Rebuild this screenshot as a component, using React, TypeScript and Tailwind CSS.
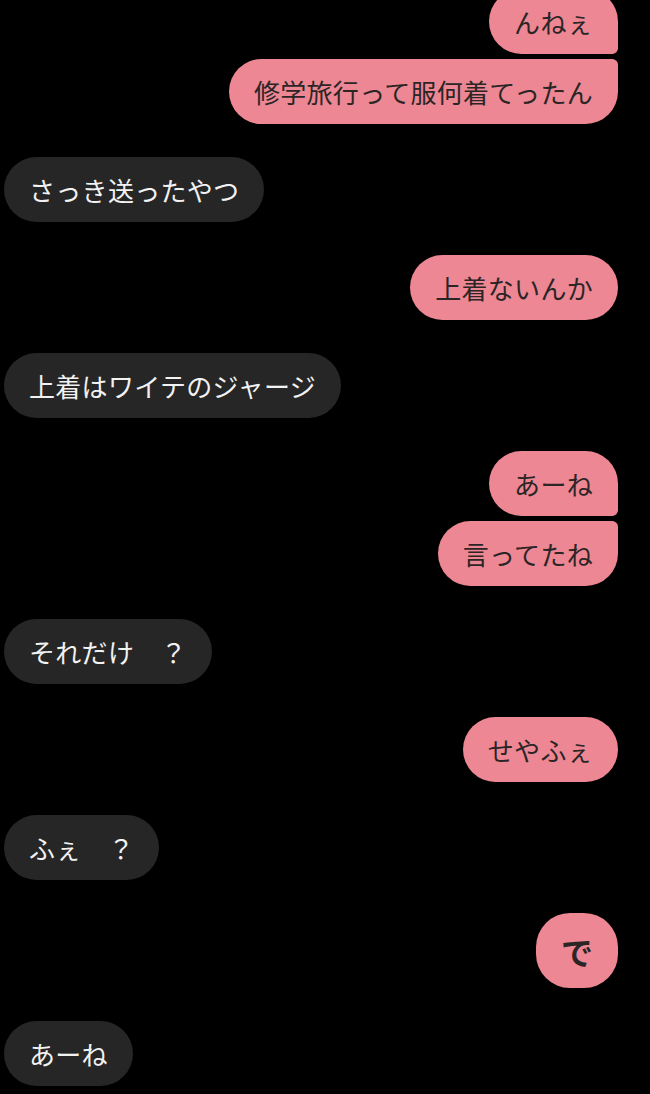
import React from "react";

type Msg = {
  text: string;
  me: boolean;
  corner?: "tr" | "br";
  big?: boolean;
  gap?: "group" | "new";
};

const messages: Msg[] = [
  { text: "んねぇ", me: true, corner: "br" },
  { text: "修学旅行って服何着てったん", me: true, corner: "tr", gap: "group" },
  { text: "さっき送ったやつ", me: false },
  { text: "上着ないんか", me: true },
  { text: "上着はワイテのジャージ", me: false },
  { text: "あーね", me: true, corner: "br" },
  { text: "言ってたね", me: true, corner: "tr", gap: "group" },
  { text: "それだけ　？", me: false },
  { text: "せやふぇ", me: true },
  { text: "ふぇ　？", me: false },
  { text: "で", me: true, big: true },
  { text: "あーね", me: false },
];

const Bubble = ({ m, first }: { m: Msg; first: boolean }) => {
  const cornerCls =
    m.corner === "br" ? "rounded-br-[6px]" : m.corner === "tr" ? "rounded-tr-[6px]" : "";
  const colorCls = m.me ? "bg-[#ee8794] text-[#2b2526]" : "bg-[#262626] text-[#f2f2f2]";
  const sizeCls = m.big
    ? "h-[75px] px-[25px] text-[32px] font-bold"
    : "h-[65px] px-[25px] text-[26px] tracking-[0.3px]";
  const gapCls = first ? "-mt-[11px]" : m.gap === "group" ? "mt-[5px]" : "mt-[33px]";
  return (
    <div className={`flex ${m.me ? "justify-end pr-[32px]" : "justify-start pl-[4px]"} ${gapCls}`}>
      <div
        className={`flex items-center rounded-[34px] whitespace-nowrap leading-none ${colorCls} ${sizeCls} ${cornerCls}`}
      >
        {m.text}
      </div>
    </div>
  );
};

export default function App() {
  return (
    <div
      className="w-[650px] h-[1094px] overflow-hidden bg-black"
      style={{ fontFamily: '"Noto Sans CJK JP", "Noto Sans", sans-serif' }}
    >
      {messages.map((m, i) => (
        <Bubble key={i} m={m} first={i === 0} />
      ))}
    </div>
  );
}
